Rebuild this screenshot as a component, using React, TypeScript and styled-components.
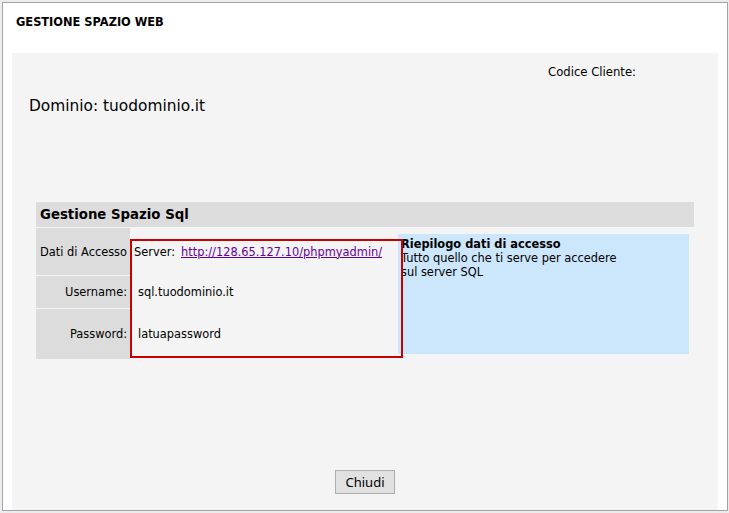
import React from 'react';
import styled, { createGlobalStyle } from 'styled-components';

const GlobalStyle = createGlobalStyle`
  html, body {
    margin: 0;
    padding: 0;
    background: #ececec;
  }
  body {
    font-family: "DejaVu Sans", Verdana, sans-serif;
    color: #000;
  }
  #root {
    padding: 2px 1px 0 2px;
  }
`;

const Frame = styled.div`
  box-sizing: border-box;
  width: 726px;
  height: 509px;
  border: 1px solid #a0a4a8;
  background: #ffffff;
  display: flex;
  flex-direction: column;
  padding: 0 9px;
`;

const Title = styled.h1`
  box-sizing: border-box;
  margin: 0;
  height: 50px;
  padding: 12px 0 0 4px;
  font-size: 11.4px;
  line-height: 14px;
  font-weight: bold;
`;

const Panel = styled.div`
  flex: 1;
  background: #f4f4f4;
  display: flex;
  flex-direction: column;
  padding: 12px 24px 0 24px;
  font-size: 11.4px;
`;

const ClientRow = styled.div`
  display: flex;
  justify-content: flex-end;
  padding-right: 58px;
  font-size: 11.65px;
  line-height: 14px;
`;

const Domain = styled.h2`
  margin: 18px 0 0 -7px;
  font-size: 15.4px;
  line-height: 18px;
  font-weight: normal;
`;

const Section = styled.section`
  margin-top: 87px;
  display: flex;
  flex-direction: column;
`;

const SectionHeader = styled.div`
  height: 25px;
  background: #dcdcdc;
  padding-left: 4px;
  font-size: 13.3px;
  line-height: 25px;
  font-weight: bold;
`;

const Grid = styled.div`
  position: relative;
  display: grid;
  grid-template-columns: 94px 261px 301px;
  grid-template-rows: 47px 32px 50px;
  gap: 1px;
  margin-top: 1px;
  line-height: 14px;
`;

const LabelCell = styled.div<{ $row: number }>`
  grid-column: 1;
  grid-row: ${(p) => p.$row};
  background: #dcdcdc;
  display: flex;
  align-items: center;
  justify-content: flex-end;
  padding-right: 3px;
  white-space: nowrap;
`;

const ValueCell = styled.div<{ $row: number; $inset: number }>`
  grid-column: 2;
  grid-row: ${(p) => p.$row};
  display: flex;
  align-items: center;
  padding-left: ${(p) => p.$inset}px;
  white-space: nowrap;
`;

const Link = styled.a`
  color: #660099;
  text-decoration: underline;
  margin-left: 6px;
`;

const InfoColumn = styled.div`
  grid-column: 3;
  grid-row: 1 / span 3;
  display: flex;
  padding: 6px 5px 5px 5px;
`;

const InfoBox = styled.div`
  flex: 1;
  background: #cce6fc;
  padding: 3px 3px;
`;

const InfoTitle = styled.div`
  font-weight: bold;
`;

const Highlight = styled.div`
  position: absolute;
  left: 94px;
  top: 11px;
  width: 273px;
  height: 119px;
  box-sizing: border-box;
  border: 2px solid #c80000;
  pointer-events: none;
`;

const CloseButton = styled.button`
  align-self: center;
  margin-top: 111px;
  width: 60px;
  height: 24px;
  padding: 0;
  border: 1px solid #adadad;
  background: #e1e1e1;
  color: #000;
  font-family: "Noto Sans", "Open Sans", sans-serif;
  font-size: 13px;
  line-height: 22px;
`;

export default function App() {
  return (
    <>
      <GlobalStyle />
      <Frame>
        <Title>GESTIONE SPAZIO WEB</Title>
        <Panel>
          <ClientRow>Codice Cliente:</ClientRow>
          <Domain>Dominio: tuodominio.it</Domain>
          <Section>
            <SectionHeader>Gestione Spazio Sql</SectionHeader>
            <Grid>
              <LabelCell $row={1}>Dati di Accesso</LabelCell>
              <ValueCell $row={1} $inset={3}>
                Server:<Link href="#">http://128.65.127.10/phpmyadmin/</Link>
              </ValueCell>
              <LabelCell $row={2}>Username:</LabelCell>
              <ValueCell $row={2} $inset={7}>sql.tuodominio.it</ValueCell>
              <LabelCell $row={3}>Password:</LabelCell>
              <ValueCell $row={3} $inset={7}>latuapassword</ValueCell>
              <InfoColumn>
                <InfoBox>
                  <InfoTitle>Riepilogo dati di accesso</InfoTitle>
                  Tutto quello che ti serve per accedere
                  <br />
                  sul server SQL
                </InfoBox>
              </InfoColumn>
              <Highlight />
            </Grid>
          </Section>
          <CloseButton type="button">Chiudi</CloseButton>
        </Panel>
      </Frame>
    </>
  );
}
